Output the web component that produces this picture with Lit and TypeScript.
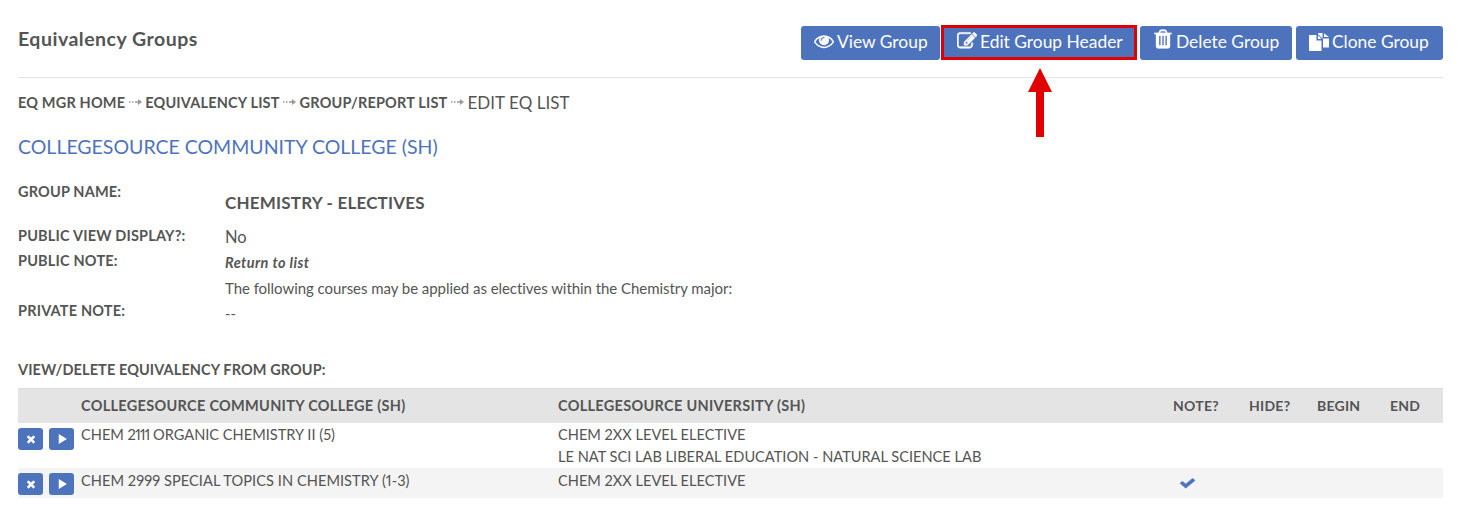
import { LitElement, html, css, svg } from "lit";
import { customElement } from "lit/decorators.js";

const eye = svg`<path d="M1664 960q-152-236-381-353 61 104 61 225 0 185-131.500 316.500t-316.500 131.500-316.500-131.500-131.500-316.500q0-121 61-225-229 117-381 353 133 205 333.500 326.500t434.500 121.500 434.500-121.500 333.500-326.500zm-720-384q0-20-14-34t-34-14q-125 0-214.500 89.500t-89.500 214.500q0 20 14 34t34 14 34-14 14-34q0-86 61-147t147-61q20 0 34-14t14-34zm848 384q0 34-20 69-140 230-376.500 368.500t-499.500 138.500-499.500-139-376.500-368q-20-35-20-69t20-69q140-229 376.500-368t499.500-139 499.500 139 376.500 368q20 35 20 69z"/>`;
const edit = svg`<path d="M888 1184l116-116-152-152-116 116v56h96v96h56zm440-720q-16-16-33 1l-350 350q-17 17-1 33t33-1l350-350q17-17 1-33zm80 594v190q0 119-84.500 203.500t-203.500 84.500h-832q-119 0-203.500-84.500t-84.500-203.500v-832q0-119 84.500-203.500t203.500-84.500h832q63 0 117 25 15 7 18 23 3 17-9 29l-49 49q-14 14-32 8-23-6-45-6h-832q-66 0-113 47t-47 113v832q0 66 47 113t113 47h832q66 0 113-47t47-113v-126q0-13 9-22l64-64q15-15 35-7t20 29zm-96-738l288 288-672 672h-288v-288zm444 132l-92 92-288-288 92-92q28-28 68-28t68 28l152 152q28 28 28 68t-28 68z"/>`;
const trash = svg`<path d="M704 1376v-704q0-14-9-23t-23-9h-64q-14 0-23 9t-9 23v704q0 14 9 23t23 9h64q14 0 23-9t9-23zm256 0v-704q0-14-9-23t-23-9h-64q-14 0-23 9t-9 23v704q0 14 9 23t23 9h64q14 0 23-9t9-23zm256 0v-704q0-14-9-23t-23-9h-64q-14 0-23 9t-9 23v704q0 14 9 23t23 9h64q14 0 23-9t9-23zm-544-992h448l-48-117q-7-9-17-11h-317q-10 2-17 11zm928 32v64q0 14-9 23t-23 9h-96v948q0 83-47 143.500t-113 60.500h-832q-66 0-113-58.500t-47-141.500v-952h-96q-14 0-23-9t-9-23v-64q0-14 9-23t23-9h309l70-167q15-37 54-63t79-26h320q40 0 79 26t54 63l70 167h309q14 0 23 9t9 23z"/>`;
const clone = svg`<path d="M0 4h7.500v5.500H12.500V20H0zM9 4.200 12.500 8H9z"/><path d="M9 2h4.500v5.500H20V16.500h-6V8L9 3zM15 2.200 19.800 6H15z"/>`;
const times = svg`<path d="M1490 1322q0 40-28 68l-136 136q-28 28-68 28t-68-28l-294-294-294 294q-28 28-68 28t-68-28l-136-136q-28-28-28-68t28-68l294-294-294-294q-28-28-28-68t28-68l136-136q28-28 68-28t68 28l294 294 294-294q28-28 68-28t68 28l136 136q28 28 28 68t-28 68l-294 294 294 294q28 28 28 68z"/>`;

@customElement("app-root")
export class AppRoot extends LitElement {
  static styles = css`
    :host { display: block; font-family: "Lato", "Open Sans", sans-serif; color: #555; background: #fff; height: 519px; overflow: hidden; font-variant-numeric: proportional-nums; }
    .page { position: relative; padding: 0 31px 0 18px; }
    .top { display: flex; justify-content: space-between; align-items: flex-start; height: 77px; border-bottom: 1px solid #e3e3e3; }
    h1 { margin: 28px 0 0; font-size: 19.5px; letter-spacing: .5px; line-height: 22px; font-weight: 700; color: #555; }
    .btns { display: flex; margin-top: 26px; }
    .btn { height: 34px; box-sizing: border-box; display: flex; align-items: center; gap: 3px; background: #4e73bd; color: #fff; border-radius: 3px; font-size: 17.4px; padding: 0 0 4px 13px; white-space: nowrap; }
    .btn svg { fill: #fff; width: 20px; height: 20px; margin-top: -1px; flex: none; }
    .view { width: 139px; }
    .edit { width: 196px; height: 35px; margin: -1px 3px 0 1px; border: 3px solid #e00000; border-radius: 0; padding: 0 0 3px 13px; gap: 3px; }
    .edit svg { stroke: #fff; stroke-width: 50; }
    .delete { width: 152px; margin-right: 4px; padding-left: 13px; gap: 2px; }
    .delete svg { width: 22px; height: 22px; margin: -4px 0 0 -1px; stroke: #fff; stroke-width: 15; }
    .clone { width: 147px; }
    .crumbs { display: flex; align-items: center; height: 22px; margin-top: 13px; font-size: 14.5px; letter-spacing: .17px; font-weight: 700; white-space: nowrap; }
    .crumbs .sep { width: 13px; height: 8px; margin: 0 3.500px; flex: none; }
    .crumbs .cur { font-weight: 400; font-size: 17px; letter-spacing: .05px; }
    h2 { margin: 22px 0 0; font-size: 19.5px; line-height: 24px; font-weight: 400; color: #4e73bd; }
    .info { display: grid; grid-template-columns: 207px 1fr; margin-top: 24px; font-size: 14.5px; }
    .lbl { font-weight: 700; line-height: 18px; letter-spacing: .18px; }
    .val { line-height: 18px; }
    .name { font-size: 17px; letter-spacing: .2px; font-weight: 700; padding-top: 9px; line-height: 22px; padding-bottom: 13px; }
    .no { font-size: 16.5px; line-height: 20px; height: 25px; box-sizing: border-box; }
    .ret { font-weight: 700; font-style: italic; letter-spacing: .42px; font-size: 14.5px; padding-top: 2px; height: 25px; box-sizing: border-box; }
    .body { font-size: 15px; letter-spacing: -.05px; padding-top: 2px; height: 25px; box-sizing: border-box; }
    .pval { padding-top: 3px; }
    .sect { margin: 38px 0 0; font-size: 14.5px; letter-spacing: .1px; font-weight: 700; line-height: 18px; }
    table { width: 1425px; border-collapse: collapse; table-layout: fixed; margin-top: 9px; font-size: 14.6px; }
    th { background: #e4e4e4; height: 34px; padding: 0; text-align: left; font-weight: 700; font-size: 14.5px; letter-spacing: .3px; border-top: 1px solid #dcdcdc; box-sizing: border-box; }
    th.s { font-size: 14px; letter-spacing: .25px; }
    td { padding: 0; vertical-align: top; }
    tr.alt td { background: #f4f4f4; }
    .r-a td { height: 45px; box-sizing: border-box; }
    .r-b td { height: 30px; box-sizing: border-box; }
    .lines div { line-height: 22px; }
    td.lines { padding-top: 1px; }
    .r-b td.lines { padding-top: 2px; }
    .tight { letter-spacing: -1px; }
    .wide { letter-spacing: .05px; }
    .acts { display: flex; gap: 6px; padding-top: 5px; }
    .ib { width: 25px; height: 22px; background: #4e73bd; border-radius: 3px; display: flex; align-items: center; justify-content: center; }
    .ib svg { width: 12px; height: 12px; fill: #fff; }
    .chk { width: 17px; height: 14px; fill: #4e73bd; stroke: #4e73bd; stroke-width: 50; display: block; margin: 8px 0 0 6px; }
    .arrow { position: absolute; left: 1028px; top: 68px; width: 24px; height: 69px; fill: #e00000; }
  `;

  sep() {
    return html`<svg class="sep" viewBox="0 0 13 8"><path d="M0 4h1.500M3 4h1.500M6 4h4" stroke="#999" stroke-width="1.300" fill="none"/><path d="M9 1l4 3-4 3z" fill="#999"/></svg>`;
  }

  acts() {
    return html`<div class="acts"><div class="ib"><svg viewBox="0 0 1792 1792">${times}</svg></div><div class="ib"><svg viewBox="0 0 11 11"><path d="M2.500 1 10 5.500 2.500 10z"/></svg></div></div>`;
  }

  render() {
    return html`<div class="page">
      <div class="top">
        <h1>Equivalency Groups</h1>
        <div class="btns">
          <div class="btn view"><svg viewBox="0 0 1792 1792">${eye}</svg>View Group</div>
          <div class="btn edit"><svg viewBox="0 0 1792 1792">${edit}</svg>Edit Group Header</div>
          <div class="btn delete"><svg viewBox="0 0 1792 1792">${trash}</svg>Delete Group</div>
          <div class="btn clone"><svg viewBox="0 0 20 20">${clone}</svg>Clone Group</div>
        </div>
      </div>
      <div class="crumbs">EQ MGR HOME${this.sep()}EQUIVALENCY LIST${this.sep()}GROUP/REPORT LIST${this.sep()}<span class="cur">EDIT EQ LIST</span></div>
      <h2>COLLEGESOURCE COMMUNITY COLLEGE (SH)</h2>
      <div class="info">
        <div class="lbl">GROUP NAME:</div><div class="val name">CHEMISTRY - ELECTIVES</div>
        <div class="lbl">PUBLIC VIEW DISPLAY?:</div><div class="val no">No</div>
        <div class="lbl">PUBLIC NOTE:</div><div class="val"><div class="ret">Return to list</div><div class="body">The following courses may be applied as electives within the Chemistry major:</div></div>
        <div class="lbl">PRIVATE NOTE:</div><div class="val pval">--</div>
      </div>
      <div class="sect">VIEW/DELETE EQUIVALENCY FROM GROUP:</div>
      <table>
        <colgroup><col style="width:63px"/><col style="width:477px"/><col style="width:615px"/><col style="width:76px"/><col style="width:68px"/><col style="width:73px"/><col style="width:53px"/></colgroup>
        <thead><tr><th></th><th>COLLEGESOURCE COMMUNITY COLLEGE (SH)</th><th>COLLEGESOURCE UNIVERSITY (SH)</th><th class="s">NOTE?</th><th class="s">HIDE?</th><th class="s">BEGIN</th><th class="s">END</th></tr></thead>
        <tbody>
          <tr class="r-a"><td>${this.acts()}</td><td class="lines"><div>CHEM <span class="tight">2111</span> ORGANIC CHEMISTRY II (5)</div></td><td class="lines"><div>CHEM 2XX LEVEL ELECTIVE</div><div>LE NAT SCI LAB LIBERAL EDUCATION - NATURAL SCIENCE LAB</div></td><td></td><td></td><td></td><td></td></tr>
          <tr class="r-b alt"><td>${this.acts()}</td><td class="lines"><div class="wide">CHEM 2999 SPECIAL TOPICS IN CHEMISTRY (1-3)</div></td><td class="lines"><div>CHEM 2XX LEVEL ELECTIVE</div></td><td><svg class="chk" viewBox="0 0 1792 1792" preserveAspectRatio="none"><path d="M1671 566q0 40-28 68l-724 724-136 136q-28 28-68 28t-68-28l-136-136-362-362q-28-28-28-68t28-68l136-136q28-28 68-28t68 28l294 295 656-657q28-28 68-28t68 28l136 136q28 28 28 68z"/></svg></td><td></td><td></td><td></td></tr>
        </tbody>
      </table>
      <svg class="arrow" viewBox="0 0 24 69"><path d="M12 0 24 24H16V69H8V24H0z"/></svg>
    </div>`;
  }
}
